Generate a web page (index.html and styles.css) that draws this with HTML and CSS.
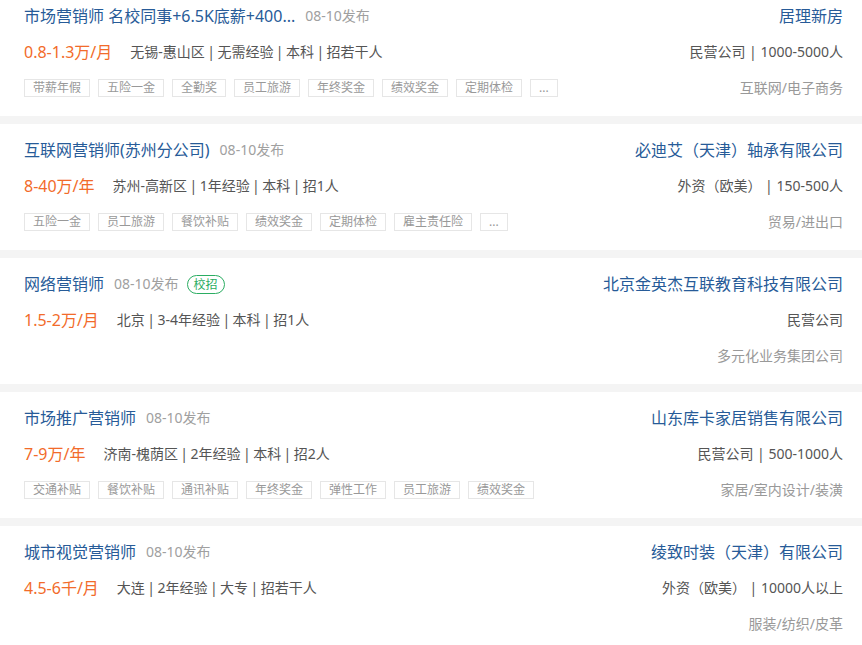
FILE: index.html
```html
<!DOCTYPE html>
<html lang="zh-CN">
<head>
<meta charset="utf-8">
<title>职位列表</title>
<link rel="stylesheet" href="styles.css">
</head>
<body>
<div class="list">
  <div class="card">
    <div class="title-row"><span class="title">市场营销师 名校同事+6.5K底薪+400...</span><span class="date">08-10发布</span></div>
    <div class="company">居理新房</div>
    <div class="info-row"><span class="salary">0.8-1.3万/月</span><span class="info">无锡-惠山区 | 无需经验 | 本科 | 招若干人</span></div>
    <div class="cinfo">民营公司 | 1000-5000人</div>
    <div class="tags"><span class="tag">带薪年假</span><span class="tag">五险一金</span><span class="tag">全勤奖</span><span class="tag">员工旅游</span><span class="tag">年终奖金</span><span class="tag">绩效奖金</span><span class="tag">定期体检</span><span class="tag">...</span></div>
    <div class="industry">互联网/电子商务</div>
  </div>
  <div class="card">
    <div class="title-row"><span class="title">互联网营销师(苏州分公司)</span><span class="date">08-10发布</span></div>
    <div class="company">必迪艾（天津）轴承有限公司</div>
    <div class="info-row"><span class="salary">8-40万/年</span><span class="info">苏州-高新区 | 1年经验 | 本科 | 招1人</span></div>
    <div class="cinfo">外资（欧美） | 150-500人</div>
    <div class="tags"><span class="tag">五险一金</span><span class="tag">员工旅游</span><span class="tag">餐饮补贴</span><span class="tag">绩效奖金</span><span class="tag">定期体检</span><span class="tag">雇主责任险</span><span class="tag">...</span></div>
    <div class="industry">贸易/进出口</div>
  </div>
  <div class="card">
    <div class="title-row"><span class="title">网络营销师</span><span class="date">08-10发布</span><span class="badge">校招</span></div>
    <div class="company">北京金英杰互联教育科技有限公司</div>
    <div class="info-row"><span class="salary">1.5-2万/月</span><span class="info">北京 | 3-4年经验 | 本科 | 招1人</span></div>
    <div class="cinfo">民营公司</div>
    <div class="tags"></div>
    <div class="industry">多元化业务集团公司</div>
  </div>
  <div class="card">
    <div class="title-row"><span class="title">市场推广营销师</span><span class="date">08-10发布</span></div>
    <div class="company">山东库卡家居销售有限公司</div>
    <div class="info-row"><span class="salary">7-9万/年</span><span class="info">济南-槐荫区 | 2年经验 | 本科 | 招2人</span></div>
    <div class="cinfo">民营公司 | 500-1000人</div>
    <div class="tags"><span class="tag">交通补贴</span><span class="tag">餐饮补贴</span><span class="tag">通讯补贴</span><span class="tag">年终奖金</span><span class="tag">弹性工作</span><span class="tag">员工旅游</span><span class="tag">绩效奖金</span></div>
    <div class="industry">家居/室内设计/装潢</div>
  </div>
  <div class="card">
    <div class="title-row"><span class="title">城市视觉营销师</span><span class="date">08-10发布</span></div>
    <div class="company">绫致时装（天津）有限公司</div>
    <div class="info-row"><span class="salary">4.5-6千/月</span><span class="info">大连 | 2年经验 | 大专 | 招若干人</span></div>
    <div class="cinfo">外资（欧美） | 10000人以上</div>
    <div class="tags"></div>
    <div class="industry">服装/纺织/皮革</div>
  </div>
</div>
</body>
</html>
```

FILE: styles.css
```css
html, body {
  margin: 0;
  padding: 0;
}
body {
  background: #f4f4f4;
  font-family: "Noto Sans", "Noto Sans CJK SC", sans-serif;
  overflow: hidden;
}
.list {
  margin-top: -10px;
  display: flex;
  flex-direction: column;
  gap: 8px;
}
.card {
  background: #fff;
  height: 126px;
  box-sizing: border-box;
  padding: 8px 19px 9px 24px;
  display: grid;
  grid-template-columns: 1fr auto;
  grid-template-rows: 36px 35px 38px;
  align-items: center;
  line-height: 20px;
}
.title-row, .info-row, .tags {
  display: flex;
  align-items: center;
  white-space: nowrap;
}
.title {
  font-size: 16px;
  color: #275b98;
}
.date {
  font-size: 14px;
  color: #a0a0a0;
  margin-left: 10px;
}
.badge {
  margin-left: 8px;
  font-size: 12px;
  color: #2bad62;
  border: 1px solid #2bad62;
  border-radius: 10px;
  height: 17px;
  line-height: 17px;
  padding: 0 6px;
}
.salary {
  font-size: 16px;
  color: #f26b2a;
}
.info {
  font-size: 14px;
  color: #555;
  margin-left: 18px;
  word-spacing: -1.2px;
}
.tags {
  gap: 8px;
}
.tag {
  font-size: 12px;
  color: #999;
  border: 1px solid #e6e6e6;
  height: 16px;
  line-height: 16px;
  padding: 0 8px;
}
.company {
  font-size: 16px;
  color: #275b98;
  text-align: right;
}
.cinfo {
  font-size: 14px;
  color: #555;
  text-align: right;
}
.industry {
  font-size: 14px;
  color: #999;
  text-align: right;
}
```
